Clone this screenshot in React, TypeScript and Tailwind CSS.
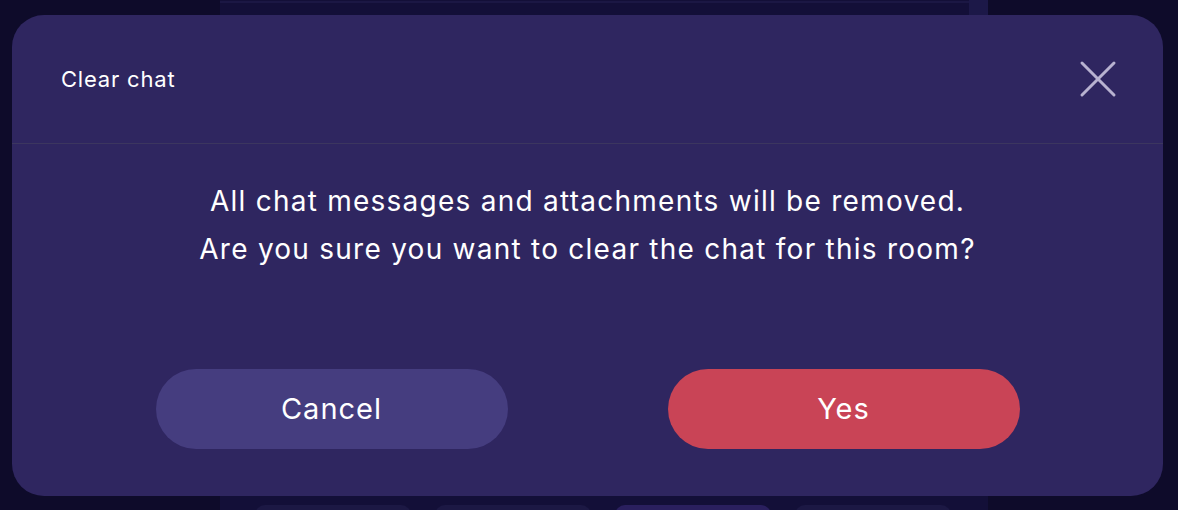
import { X } from 'lucide-react';

const tabs = ['a', 'b', 'c', 'd'];

function ClearChatDialog() {
    return (
        <div className="absolute left-[12px] top-[15px] w-[1151px] h-[481px] rounded-[32px] bg-[#2f2660] flex flex-col">
            {/* Header */}
            <div className="h-[129px] px-[49px] flex items-center justify-between border-b border-[#3c365f]">
                <h2 className="text-[22px] text-white tracking-[0.8px]">Clear chat</h2>
                <button className="w-[32px] h-[32px] flex items-center justify-center text-[#b8b2d0]">
                    <X size={64} strokeWidth={3} absoluteStrokeWidth className="shrink-0" />
                </button>
            </div>
            {/* Body */}
            <div className="flex-1 flex flex-col items-center pt-[33px] pb-[47px]">
                <p className="text-[28px] leading-[48px] text-white text-center tracking-[1.25px]">
                    All chat messages and attachments will be removed.
                    <br />
                    Are you sure you want to clear the chat for this room?
                </p>
                <div className="mt-auto flex gap-[160px]">
                    <button className="w-[352px] h-[80px] rounded-full bg-[#453d7f] text-white text-[29px] tracking-[1px]">Cancel</button>
                    <button className="w-[352px] h-[80px] rounded-full bg-[#c94456] text-white text-[29px] tracking-[1px]">Yes</button>
                </div>
            </div>
        </div>
    );
}

export default function App() {
    return (
        <div
            className="relative w-full h-[510px] bg-[#0e0b2a] overflow-hidden"
            style={{ fontFamily: 'Inter, "Noto Sans", sans-serif' }}
        >
            {/* page behind the overlay */}
            <div className="ml-[220px] w-[768px] h-full bg-[#130f38] flex flex-col">
                <div className="flex h-[15px]">
                    <div className="flex-1 pt-[1px]">
                        <div className="h-[2px] bg-[#1b1744]" />
                    </div>
                    <div className="w-[19px] bg-[#1c1848]" />
                </div>
                <div className="flex-1" />
                <div className="flex gap-[24px] pl-[35px] h-[5px]">
                    {tabs.map((t, i) => (
                        <div
                            key={t}
                            className={`w-[156px] h-[20px] rounded-[12px] ${i === 2 ? 'bg-[#2a1f5e]' : 'bg-[#1c1844]'}`}
                        />
                    ))}
                </div>
            </div>
            <ClearChatDialog />
        </div>
    );
}
